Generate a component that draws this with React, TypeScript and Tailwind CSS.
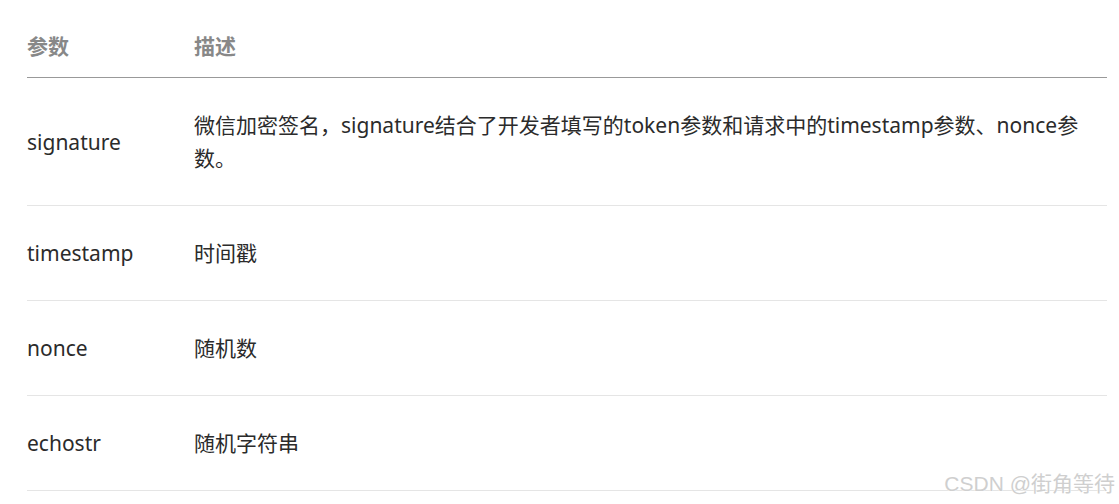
import React from "react";

const rows: { k: string; v: React.ReactNode }[] = [
  {
    k: "signature",
    v: (
      <>
        微信加密签名，signature结合了开发者填写的token参数和请求中的timestamp参数、nonce参
        <br />
        数。
      </>
    ),
  },
  { k: "timestamp", v: "时间戳" },
  { k: "nonce", v: "随机数" },
  { k: "echostr", v: "随机字符串" },
];

export default function App() {
  return (
    <div
      className="relative w-[1119px] h-[504px] bg-white overflow-hidden"
      style={{ fontFamily: '"Noto Sans", "Noto Sans CJK SC", sans-serif' }}
    >
      <div className="pl-[27px] pr-[12px]">
        <table className="w-[1080px] border-collapse text-[21px] leading-[33px] text-[#2b2b2b]">
          <thead>
            <tr className="border-b border-[#999]">
              <th className="w-[167px] text-left font-bold text-[#888] pt-[30px] pb-[14px] align-top">参数</th>
              <th className="text-left font-bold text-[#888] pt-[30px] pb-[14px] align-top">描述</th>
            </tr>
          </thead>
          <tbody>
            {rows.map((r) => (
              <tr key={r.k} className="border-b border-[#e5e5e5]">
                <td className="pt-[31px] pb-[30px] align-middle">{r.k}</td>
                <td className="pt-[31px] pb-[30px] pr-[10px] align-middle whitespace-nowrap">{r.v}</td>
              </tr>
            ))}
          </tbody>
        </table>
      </div>
      <div
        className="absolute right-[4px] top-[470px] text-[21px] leading-[28px] text-[#cfcfcf]"
        style={{ fontFamily: '"Liberation Sans", "Noto Sans CJK SC", sans-serif', textShadow: "0 0 1px #fff, 0 0 1px #fff" }}
      >
        CSDN @街角等待
      </div>
    </div>
  );
}
